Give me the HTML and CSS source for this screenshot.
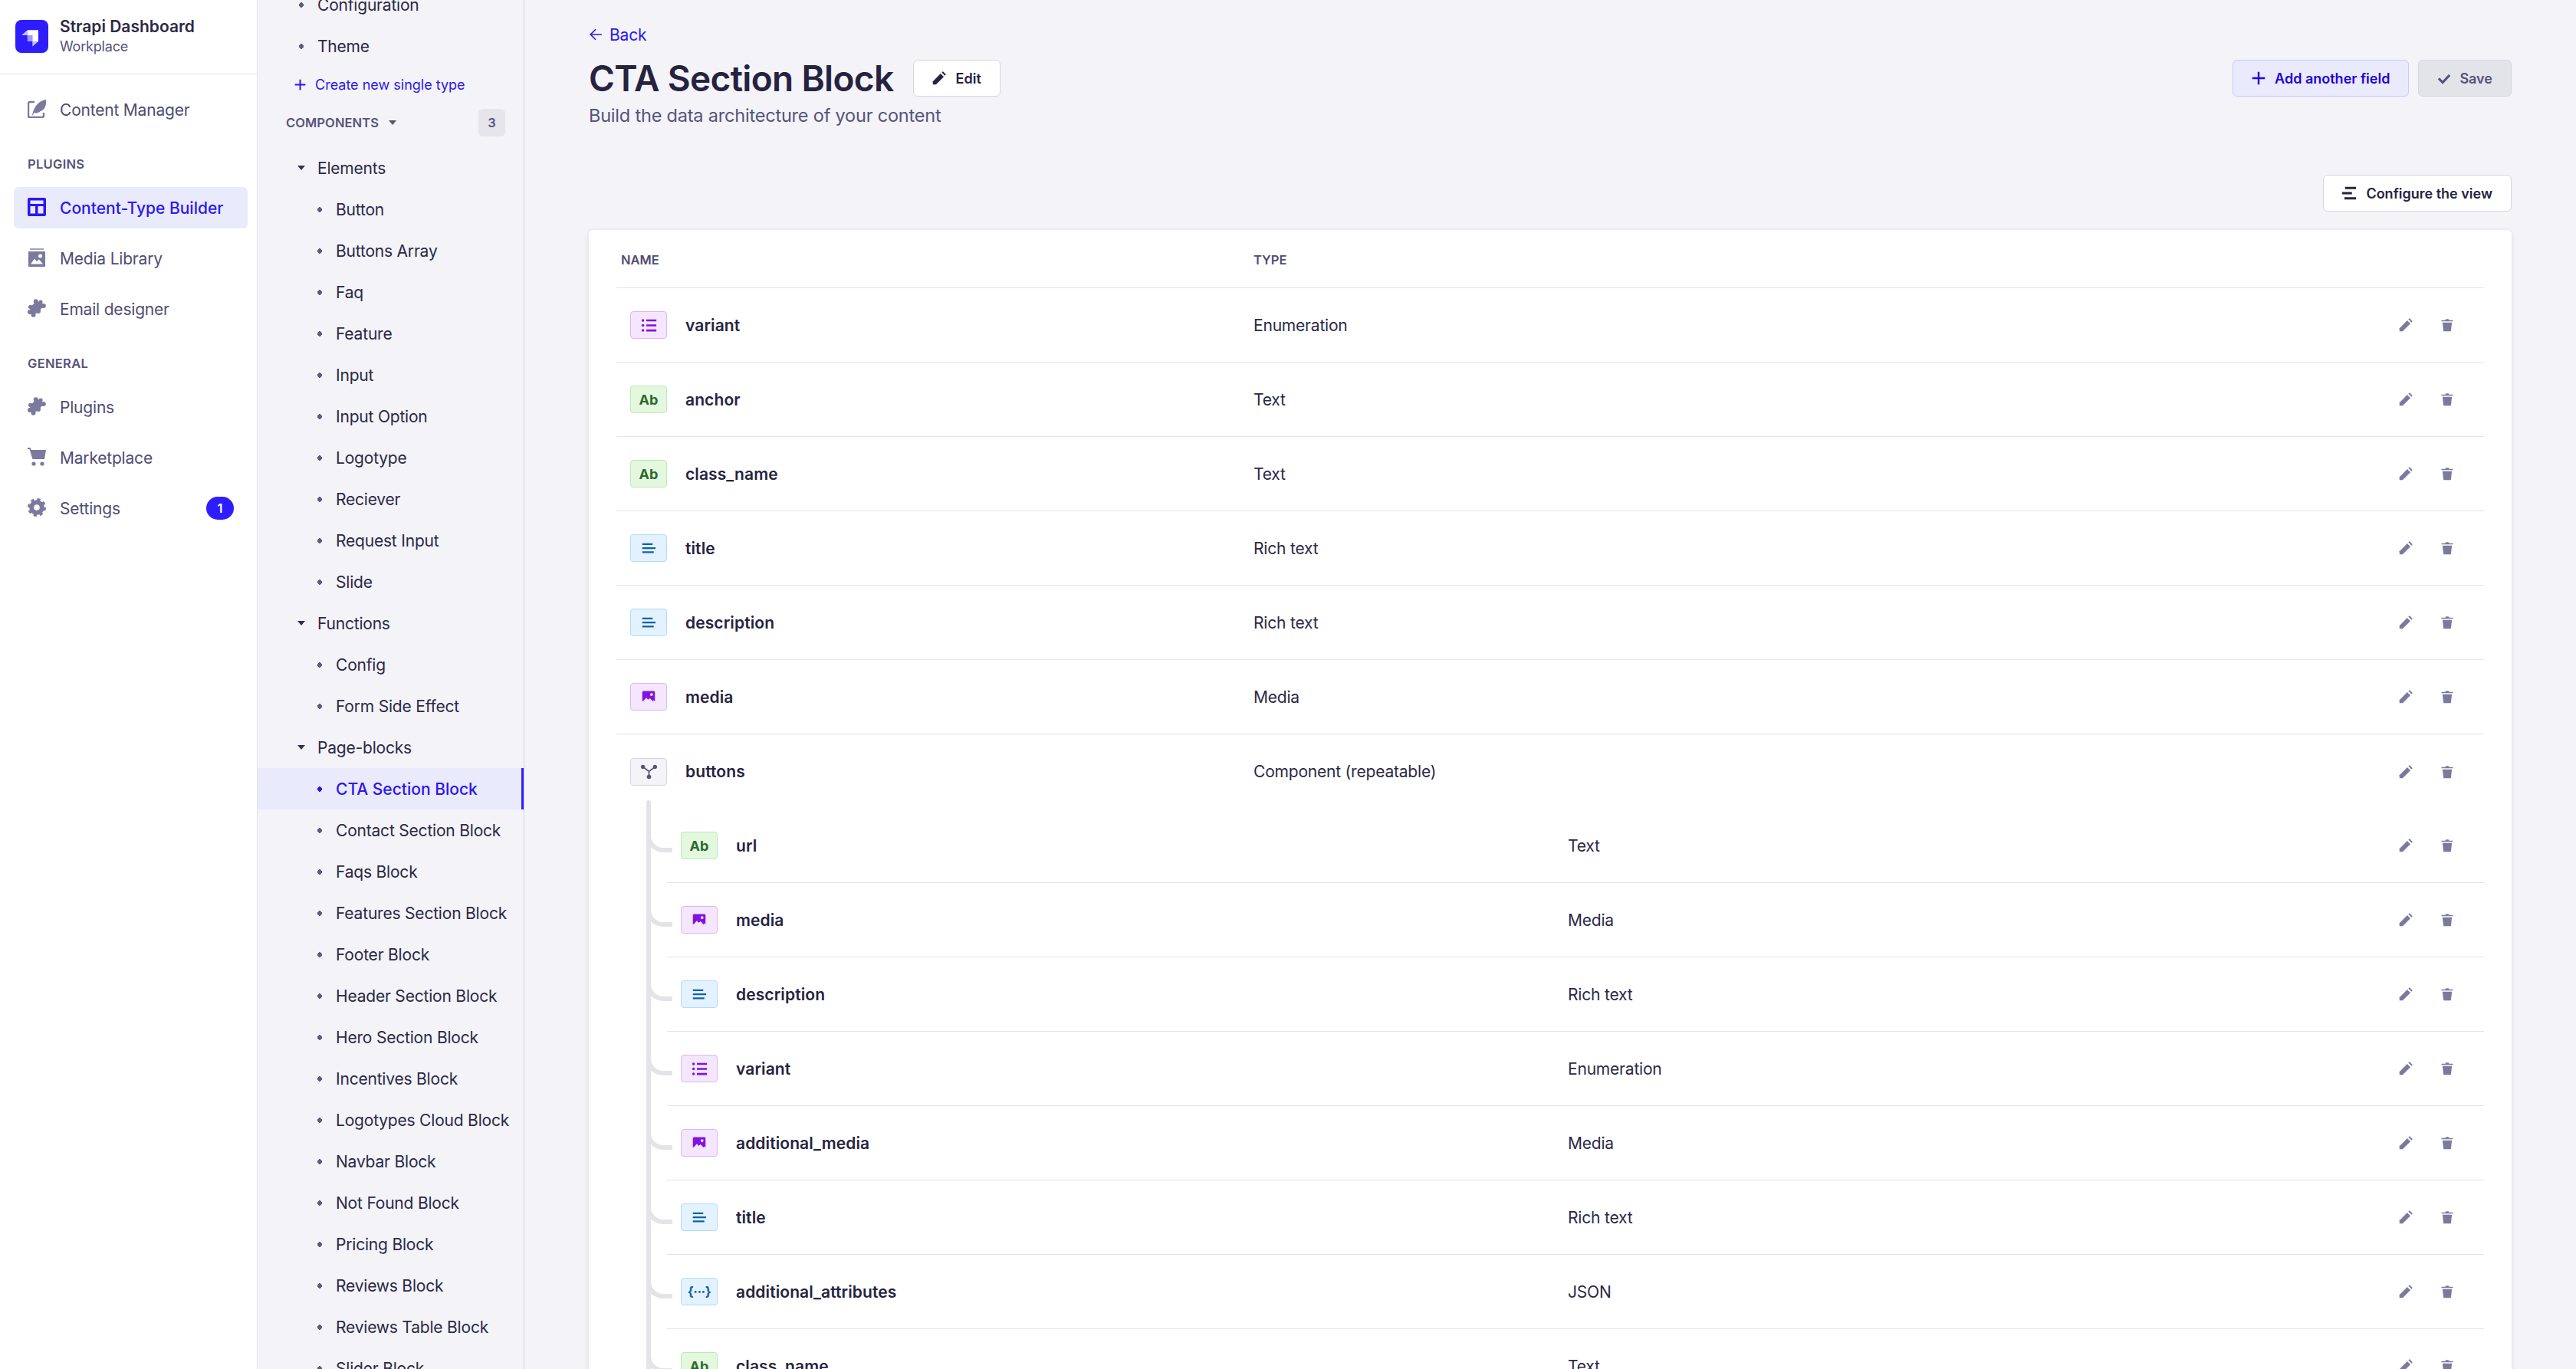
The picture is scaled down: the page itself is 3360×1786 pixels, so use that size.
FILE: index.html
```html
<!DOCTYPE html>
<html lang="en">
<head>
    <meta charset="UTF-8">
    <meta name="viewport" content="width=device-width, initial-scale=1.0">
    <title>Strapi Dashboard</title>
    <link rel="stylesheet" href="styles.css">
</head>
<body>
    <svg class="sprites" aria-hidden="true">
        <symbol id="i-pencil" viewBox="0 0 24 24"><path d="M1 23v-5.500L14.500 4 20 9.500 6.500 23H1z"/><path d="M16.500 2l1.200-1.200c.4-.4 1-.4 1.400 0l4.100 4.100c.4.4.4 1 0 1.400L22 7.500 16.500 2z"/></symbol>
        <symbol id="i-trash" viewBox="0 0 24 24"><path d="M2 3.500h6.500L10 1.500h4l1.500 2H22v2.200H2z"/><path d="M3.800 7.500h16.400L18.400 23H5.600z"/></symbol>
        <symbol id="i-check" viewBox="0 0 24 24"><path d="M2.500 12.500l7 7L21.500 6.500" fill="none" stroke="currentColor" stroke-width="4"/></symbol>
        <symbol id="i-plus" viewBox="0 0 24 24"><path d="M12 1v22M1 12h22" fill="none" stroke="currentColor" stroke-width="3.200"/></symbol>
        <symbol id="i-layer" viewBox="0 0 24 24"><path d="M5 1h19v4H5zM0 10h17v4H0zM4 19h20v4H4z"/></symbol>
        <symbol id="i-list" viewBox="0 0 24 24"><circle cx="3" cy="4.500" r="2"/><circle cx="3" cy="12" r="2"/><circle cx="3" cy="19.500" r="2"/><path d="M8 3h15v3H8zM8 10.500h15v3H8zM8 18h15v3H8z"/></symbol>
        <symbol id="i-rich" viewBox="0 0 24 24"><path d="M1 3.500h18v3H1zM1 10.500h23v3H1zM1 17.500h20v3H1z"/></symbol>
        <symbol id="i-media" viewBox="0 0 24 24"><path fill-rule="evenodd" d="M1 4a2 2 0 0 1 2-2h18a2 2 0 0 1 2 2v16l-2-2-1.500 2-5-5.500L11 17l-3-3.500L3 19l-2 1zM17 5.500a2.500 2.500 0 1 0 0 5 2.500 2.500 0 0 0 0-5z"/></symbol>
        <symbol id="i-comp" viewBox="0 0 24 24"><path d="M3 5l9 7 9-7M12 12v8" fill="none" stroke="currentColor" stroke-width="2"/><circle cx="3" cy="5" r="3"/><circle cx="21" cy="5" r="3"/><circle cx="12" cy="20" r="3.200"/></symbol>
        <symbol id="i-puzzle" viewBox="0 0 24 24"><path d="M11 3l5.500 1L21 9l-7 8-6.500 4L3 17l.5-6z"/><circle cx="10.800" cy="3.200" r="3"/><circle cx="17" cy="4" r="2.600"/><circle cx="20.800" cy="9" r="3"/><circle cx="14" cy="16" r="3"/><circle cx="3.800" cy="10.500" r="2.800"/><circle cx="3" cy="17" r="3"/><circle cx="7.500" cy="20.800" r="3"/></symbol>
    </svg>

    <aside class="nav">
        <header class="brand">
            <svg class="brand-logo" viewBox="0 0 43 43">
                <rect width="43" height="43" rx="8" fill="#2e1dff"/>
                <path d="M15.700 13.300H30V28h-7.700v-8h-6.600z" fill="#fff"/>
                <path d="M15.700 20h6.600v8h-6.600z" fill="#fff" opacity=".55"/>
                <path d="M8 20l7.700-6.700V20zM22.300 28H30l-7.700 6.700z" fill="#fff" opacity=".7"/>
            </svg>
            <div>
                <div class="brand-name">Strapi Dashboard</div>
                <div class="brand-sub">Workplace</div>
            </div>
        </header>

        <div class="nav-body">
            <a class="nav-link">
                <svg class="nav-icon" viewBox="0 0 24 24"><path d="M9 4H3a2 2 0 0 0-2 2v16a2 2 0 0 0 2 2h16a2 2 0 0 0 2-2v-4" fill="none" stroke="currentColor" stroke-width="2.400" transform="translate(0 -1)"/><path d="M6 20C8 10 14 1 24 0c1 8-2 13-7 15-4 3-7 3-9 2l-1 3.500z"/></svg>
                <span>Content Manager</span>
            </a>

            <div class="nav-label">Plugins</div>
            <a class="nav-link is-active">
                <svg class="nav-icon" viewBox="0 0 24 24"><path fill-rule="evenodd" d="M2 0h20a2 2 0 0 1 2 2v20a2 2 0 0 1-2 2H2a2 2 0 0 1-2-2V2a2 2 0 0 1 2-2zm1.500 3.500v4.500h17V3.500zm0 7.500v9.500H10V11zm10 0v9.500h7V11z"/></svg>
                <span>Content-Type Builder</span>
            </a>
            <a class="nav-link">
                <svg class="nav-icon" viewBox="0 0 24 24"><path d="M3 0h18v2H3z" opacity=".7"/><path fill-rule="evenodd" d="M2 4h20a1 1 0 0 1 1 1v18a1 1 0 0 1-1 1H2a1 1 0 0 1-1-1V5a1 1 0 0 1 1-1zm14.500 3.500a2.500 2.500 0 1 0 0 5 2.500 2.500 0 0 0 0-5zM4 20.500h16l-5-6-3 2.500-3-3.500z"/></svg>
                <span>Media Library</span>
            </a>
            <a class="nav-link">
                <svg class="nav-icon"><use href="#i-puzzle"/></svg>
                <span>Email designer</span>
            </a>

            <div class="nav-label">General</div>
            <a class="nav-link">
                <svg class="nav-icon"><use href="#i-puzzle"/></svg>
                <span>Plugins</span>
            </a>
            <a class="nav-link">
                <svg class="nav-icon" viewBox="0 0 24 24"><path d="M0 0h3.500l1.300 3H24l-2 12H6.500L2.500 2H0z"/><circle cx="8" cy="21" r="2.600"/><circle cx="19" cy="21" r="2.600"/></svg>
                <span>Marketplace</span>
            </a>
            <a class="nav-link">
                <svg class="nav-icon" viewBox="0 0 24 24"><circle cx="12" cy="12" r="6.800" fill="none" stroke="currentColor" stroke-width="6"/><circle cx="12" cy="12" r="10.500" fill="none" stroke="currentColor" stroke-width="3" stroke-dasharray="4.250 4"/></svg>
                <span>Settings</span>
                <span class="nav-badge">1</span>
            </a>
        </div>
    </aside>

    <aside class="tree">
        <div class="tree-scroll">
            <a class="tree-item"><i class="dot"></i>Configuration</a>
            <a class="tree-item"><i class="dot"></i>Theme</a>
            <a class="tree-create">
                <svg class="tree-plus"><use href="#i-plus"/></svg>
                Create new single type
            </a>

            <div class="tree-head">
                <span>Components</span>
                <i class="caret caret-grey"></i>
                <span class="tree-count">3</span>
            </div>

            <a class="tree-item"><i class="caret"></i>Elements</a>
            <a class="tree-item sub"><i class="dot"></i>Button</a>
            <a class="tree-item sub"><i class="dot"></i>Buttons Array</a>
            <a class="tree-item sub"><i class="dot"></i>Faq</a>
            <a class="tree-item sub"><i class="dot"></i>Feature</a>
            <a class="tree-item sub"><i class="dot"></i>Input</a>
            <a class="tree-item sub"><i class="dot"></i>Input Option</a>
            <a class="tree-item sub"><i class="dot"></i>Logotype</a>
            <a class="tree-item sub"><i class="dot"></i>Reciever</a>
            <a class="tree-item sub"><i class="dot"></i>Request Input</a>
            <a class="tree-item sub"><i class="dot"></i>Slide</a>

            <a class="tree-item"><i class="caret"></i>Functions</a>
            <a class="tree-item sub"><i class="dot"></i>Config</a>
            <a class="tree-item sub"><i class="dot"></i>Form Side Effect</a>

            <a class="tree-item"><i class="caret"></i>Page-blocks</a>
            <a class="tree-item sub is-active"><i class="dot"></i>CTA Section Block</a>
            <a class="tree-item sub"><i class="dot"></i>Contact Section Block</a>
            <a class="tree-item sub"><i class="dot"></i>Faqs Block</a>
            <a class="tree-item sub"><i class="dot"></i>Features Section Block</a>
            <a class="tree-item sub"><i class="dot"></i>Footer Block</a>
            <a class="tree-item sub"><i class="dot"></i>Header Section Block</a>
            <a class="tree-item sub"><i class="dot"></i>Hero Section Block</a>
            <a class="tree-item sub"><i class="dot"></i>Incentives Block</a>
            <a class="tree-item sub"><i class="dot"></i>Logotypes Cloud Block</a>
            <a class="tree-item sub"><i class="dot"></i>Navbar Block</a>
            <a class="tree-item sub"><i class="dot"></i>Not Found Block</a>
            <a class="tree-item sub"><i class="dot"></i>Pricing Block</a>
            <a class="tree-item sub"><i class="dot"></i>Reviews Block</a>
            <a class="tree-item sub"><i class="dot"></i>Reviews Table Block</a>
            <a class="tree-item sub"><i class="dot"></i>Slider Block</a>
        </div>
    </aside>

    <main class="main">
        <a class="back">
            <svg class="back-icon" viewBox="0 0 16 16"><path d="M15 8H2M8 2L2 8l6 6" fill="none" stroke="currentColor" stroke-width="1.500"/></svg>
            Back
        </a>

        <div class="title-row">
            <h1 class="title">CTA Section Block</h1>
            <button class="btn btn-white btn-edit"><svg class="btn-icon"><use href="#i-pencil"/></svg>Edit</button>
            <div class="title-actions">
                <button class="btn btn-soft btn-add"><svg class="btn-icon"><use href="#i-plus"/></svg>Add another field</button>
                <button class="btn btn-off btn-save"><svg class="btn-icon"><use href="#i-check"/></svg>Save</button>
            </div>
        </div>
        <p class="subtitle">Build the data architecture of your content</p>

        <div class="toolbar">
            <button class="btn btn-white btn-config"><svg class="btn-icon"><use href="#i-layer"/></svg>Configure the view</button>
        </div>

        <section class="card">
            <div class="thead">
                <span>Name</span>
                <span>Type</span>
            </div>

            <div class="row">
                <span class="chip purple chip-wide"><svg><use href="#i-list"/></svg></span>
                <b>variant</b><span>Enumeration</span>
                <span class="actions"><svg><use href="#i-pencil"/></svg><svg><use href="#i-trash"/></svg></span>
            </div>
            <div class="row">
                <span class="chip green">Ab</span>
                <b>anchor</b><span>Text</span>
                <span class="actions"><svg><use href="#i-pencil"/></svg><svg><use href="#i-trash"/></svg></span>
            </div>
            <div class="row">
                <span class="chip green">Ab</span>
                <b>class_name</b><span>Text</span>
                <span class="actions"><svg><use href="#i-pencil"/></svg><svg><use href="#i-trash"/></svg></span>
            </div>
            <div class="row">
                <span class="chip blue"><svg><use href="#i-rich"/></svg></span>
                <b>title</b><span>Rich text</span>
                <span class="actions"><svg><use href="#i-pencil"/></svg><svg><use href="#i-trash"/></svg></span>
            </div>
            <div class="row">
                <span class="chip blue"><svg><use href="#i-rich"/></svg></span>
                <b>description</b><span>Rich text</span>
                <span class="actions"><svg><use href="#i-pencil"/></svg><svg><use href="#i-trash"/></svg></span>
            </div>
            <div class="row">
                <span class="chip purple"><svg><use href="#i-media"/></svg></span>
                <b>media</b><span>Media</span>
                <span class="actions"><svg><use href="#i-pencil"/></svg><svg><use href="#i-trash"/></svg></span>
            </div>
            <div class="row no-line">
                <span class="chip grey chip-wide"><svg><use href="#i-comp"/></svg></span>
                <b>buttons</b><span>Component (repeatable)</span>
                <span class="actions"><svg><use href="#i-pencil"/></svg><svg><use href="#i-trash"/></svg></span>
            </div>

            <div class="nested">
                <div class="row">
                    <span class="chip green">Ab</span>
                    <b>url</b><span>Text</span>
                    <span class="actions"><svg><use href="#i-pencil"/></svg><svg><use href="#i-trash"/></svg></span>
                </div>
                <div class="row">
                    <span class="chip purple"><svg><use href="#i-media"/></svg></span>
                    <b>media</b><span>Media</span>
                    <span class="actions"><svg><use href="#i-pencil"/></svg><svg><use href="#i-trash"/></svg></span>
                </div>
                <div class="row">
                    <span class="chip blue"><svg><use href="#i-rich"/></svg></span>
                    <b>description</b><span>Rich text</span>
                    <span class="actions"><svg><use href="#i-pencil"/></svg><svg><use href="#i-trash"/></svg></span>
                </div>
                <div class="row">
                    <span class="chip purple chip-wide"><svg><use href="#i-list"/></svg></span>
                    <b>variant</b><span>Enumeration</span>
                    <span class="actions"><svg><use href="#i-pencil"/></svg><svg><use href="#i-trash"/></svg></span>
                </div>
                <div class="row">
                    <span class="chip purple"><svg><use href="#i-media"/></svg></span>
                    <b>additional_media</b><span>Media</span>
                    <span class="actions"><svg><use href="#i-pencil"/></svg><svg><use href="#i-trash"/></svg></span>
                </div>
                <div class="row">
                    <span class="chip blue"><svg><use href="#i-rich"/></svg></span>
                    <b>title</b><span>Rich text</span>
                    <span class="actions"><svg><use href="#i-pencil"/></svg><svg><use href="#i-trash"/></svg></span>
                </div>
                <div class="row">
                    <span class="chip blue chip-json">{&middot;&middot;&middot;}</span>
                    <b>additional_attributes</b><span>JSON</span>
                    <span class="actions"><svg><use href="#i-pencil"/></svg><svg><use href="#i-trash"/></svg></span>
                </div>
                <div class="row">
                    <span class="chip green">Ab</span>
                    <b>class_name</b><span>Text</span>
                    <span class="actions"><svg><use href="#i-pencil"/></svg><svg><use href="#i-trash"/></svg></span>
                </div>
            </div>
        </section>
    </main>
</body>
</html>
```

FILE: styles.css
```css
* {
    box-sizing: border-box;
}
html, body {
    height: 100%;
}
body {
    margin: 0;
    display: flex;
    overflow: hidden;
    background: #f3f3f8;
    color: #2b2946;
    font-family: Inter, "Noto Sans", sans-serif;
    font-size: 21px;
    letter-spacing: -.2px;
}
.sprites {
    display: none;
}
svg {
    fill: currentColor;
    flex: none;
}

/* main nav */
.nav {
    width: 336px;
    flex: none;
    background: #fff;
    border-right: 1px solid #e3e3ea;
}
.brand {
    display: flex;
    align-items: center;
    gap: 15px;
    height: 97px;
    padding: 0 20px 2px;
    border-bottom: 1px solid #e3e3ea;
}
.brand-logo {
    width: 43px;
    height: 43px;
}
.brand-name {
    font-weight: 600;
    line-height: 28px;
    letter-spacing: 0;
}
.brand-sub {
    font-size: 18px;
    line-height: 24px;
    color: #55537a;
}
.nav-body {
    padding: 19px 12px 0 18px;
    display: flex;
    flex-direction: column;
    gap: 12px;
}
.nav-link {
    display: flex;
    align-items: center;
    gap: 18px;
    height: 54px;
    padding: 0 18px;
    border-radius: 6px;
    color: #4f4d72;
}
.nav-icon {
    width: 24px;
    height: 24px;
    margin-top: -2px;
    color: #7b7a9e;
}
.nav-link.is-active {
    background: #eaeafd;
    color: #2a17f5;
    font-weight: 500;
    letter-spacing: 0;
}
.nav-link.is-active .nav-icon {
    color: #2a17f5;
}
.nav-badge {
    margin-left: auto;
    width: 36px;
    height: 30px;
    border-radius: 15px;
    background: #2e1dff;
    color: #fff;
    font-size: 16.5px;
    font-weight: 600;
    line-height: 30px;
    text-align: center;
}
.nav-label {
    height: 24px;
    margin: 20px 18px 6px;
    font-size: 16.5px;
    font-weight: 600;
    line-height: 24px;
    letter-spacing: .3px;
    text-transform: uppercase;
    color: #55537a;
}

/* content type tree */
.tree {
    width: 348px;
    flex: none;
    overflow: hidden;
    border-right: 1px solid #d5d5e0;
}
.tree-scroll {
    margin-top: -21px;
}
.tree-item {
    display: flex;
    align-items: center;
    gap: 16px;
    height: 54px;
    padding-left: 52px;
}
.tree-item.sub {
    padding-left: 76px;
}
.tree-item.is-active {
    background: #eaeafd;
    border-right: 3px solid #2e1dff;
    color: #2a17f5;
    font-weight: 500;
    letter-spacing: 0;
}
.dot {
    width: 10px;
    height: 7px;
    background: radial-gradient(circle 3.200px at 50% 50%, #5d5b80 96%, transparent 100%);
}
.is-active .dot {
    background: radial-gradient(circle 3.200px at 50% 50%, #2a17f5 96%, transparent 100%);
}
.caret {
    width: 0;
    height: 0;
    border-left: 5.500px solid transparent;
    border-right: 5.500px solid transparent;
    border-top: 6px solid #32304f;
}
.caret-grey {
    border-top-color: #55537a;
    margin-left: 13px;
}
.tree-create {
    display: flex;
    align-items: center;
    gap: 12px;
    height: 46px;
    padding-left: 48px;
    font-size: 18px;
    letter-spacing: 0;
    color: #2a17f5;
}
.tree-plus {
    width: 15px;
    height: 15px;
}
.tree-head {
    display: flex;
    align-items: center;
    height: 36px;
    margin: 9px 24px 14px 37px;
    font-size: 16.5px;
    font-weight: 600;
    letter-spacing: .1px;
    text-transform: uppercase;
    color: #55537a;
}
.tree-count {
    margin-left: auto;
    width: 35px;
    height: 36px;
    border-radius: 6px;
    background: #e5e5eb;
    line-height: 36px;
    text-align: center;
}

/* page */
.main {
    flex: 1;
    min-width: 0;
    padding: 30px 84px 0;
}
.back {
    display: flex;
    align-items: center;
    gap: 9px;
    height: 30px;
    color: #2a17f5;
}
.back-icon {
    width: 18px;
    height: 18px;
}
.title-row {
    display: flex;
    align-items: center;
    margin-top: 18px;
    height: 48px;
}
.title {
    margin: 0;
    font-size: 46px;
    font-weight: 600;
    line-height: 48px;
    letter-spacing: -.65px;
    color: #25233f;
}
.title-actions {
    margin-left: auto;
    display: flex;
    gap: 12px;
}
.subtitle {
    margin: 10px 0 0;
    font-size: 23.5px;
    line-height: 30px;
    color: #55537a;
}
.btn {
    display: flex;
    align-items: center;
    height: 48px;
    padding: 0 24px;
    gap: 13px;
    border: 1px solid #d5d5e0;
    border-radius: 6px;
    font-family: inherit;
    font-size: 18px;
    font-weight: 600;
}
.btn-icon {
    width: 18px;
    height: 18px;
}
.btn-white {
    background: #fff;
    color: #25233f;
}
.btn-edit {
    margin-left: 25px;
}
.btn-soft {
    background: #eaeafd;
    border-color: #c8c8fb;
    color: #2200d8;
}
.btn-add {
    gap: 12px;
}
.btn-off {
    background: #e3e3ea;
    color: #55537a;
}
.btn-save {
    gap: 11px;
}
.toolbar {
    display: flex;
    justify-content: flex-end;
    margin-top: 62px;
}
.card {
    height: 1600px;
    margin-top: 24px;
    padding: 0 36px;
    background: #fff;
    border-radius: 6px;
    box-shadow: 0 1px 6px rgba(33, 33, 52, .1);
}
.thead {
    display: grid;
    grid-template-columns: 831px 1fr;
    align-items: center;
    height: 76px;
    padding: 3px 0 0 6px;
    border-bottom: 1px solid #e3e3ea;
    font-size: 16.5px;
    font-weight: 600;
    letter-spacing: 0;
    text-transform: uppercase;
    color: #4f4d72;
}
.thead span + span {
    margin-left: -6px;
}
.row {
    position: relative;
    display: grid;
    grid-template-columns: 72px 741px 1fr auto;
    align-items: center;
    height: 97px;
    padding-left: 18px;
    border-bottom: 1px solid #e3e3ea;
}
.row.no-line {
    border-bottom: 0;
}
.row b {
    font-weight: 600;
    letter-spacing: .1px;
    color: #25233f;
}
.chip {
    display: flex;
    align-items: center;
    justify-content: center;
    width: 48px;
    height: 36px;
    border: 1px solid;
    border-radius: 4px;
    font-size: 18px;
    font-weight: 700;
    letter-spacing: 0;
}
.chip svg {
    width: 18px;
    height: 18px;
}
.chip-wide svg {
    width: 21px;
    height: 21px;
}
.purple {
    background: #f3e6fd;
    border-color: #dfb6f5;
    color: #8312e0;
}
.green {
    background: #e4f8e0;
    border-color: #b8ecb0;
    color: #2a6b2a;
}
.blue {
    background: #e3f2fe;
    border-color: #b0dcfc;
    color: #0f62a6;
}
.grey {
    background: #f3f3f8;
    border-color: #d5d5e0;
    color: #55537a;
}
.chip-json {
    font-size: 17px;
    letter-spacing: -.5px;
}
.actions {
    display: flex;
    gap: 36px;
    padding-right: 39px;
    color: #7b7a9e;
}
.actions svg {
    width: 18px;
    height: 18px;
}

/* nested component fields with the connector lines */
.nested {
    position: relative;
    margin-left: 66px;
}
.nested::before {
    content: "";
    position: absolute;
    left: -27px;
    top: -11px;
    bottom: 0;
    width: 6px;
    border-radius: 3px 3px 0 0;
    background: #e3e3ea;
}
.nested .row {
    grid-template-columns: 72px 1085px 1fr auto;
}
.nested .row::before {
    content: "";
    position: absolute;
    left: -27px;
    top: 18px;
    width: 28px;
    height: 33px;
    border-left: 6px solid #e3e3ea;
    border-bottom: 6px solid #e3e3ea;
    border-bottom-left-radius: 22px;
}
```
